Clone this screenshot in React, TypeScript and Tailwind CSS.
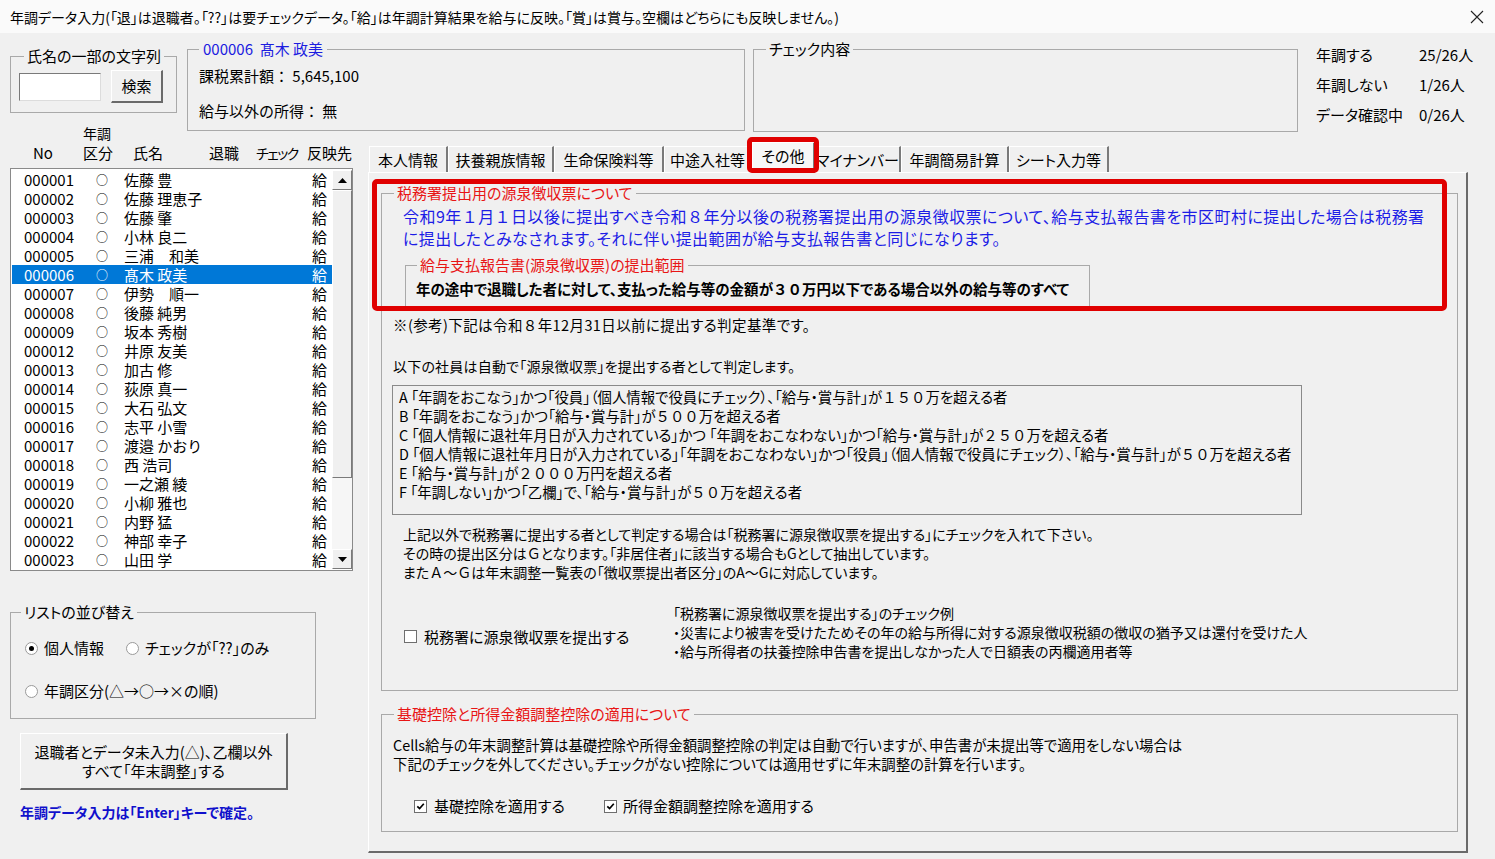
import React from "react";

const employees: [string, string][] = [
  ["000001", "佐藤 豊"],
  ["000002", "佐藤 理恵子"],
  ["000003", "佐藤 肇"],
  ["000004", "小林 良二"],
  ["000005", "三浦　和美"],
  ["000006", "髙木 政美"],
  ["000007", "伊勢　順一"],
  ["000008", "後藤 純男"],
  ["000009", "坂本 秀樹"],
  ["000012", "井原 友美"],
  ["000013", "加古 修"],
  ["000014", "荻原 真一"],
  ["000015", "大石 弘文"],
  ["000016", "志平 小雪"],
  ["000017", "渡邉 かおり"],
  ["000018", "西 浩司"],
  ["000019", "一之瀬 綾"],
  ["000020", "小柳 雅也"],
  ["000021", "内野 猛"],
  ["000022", "神部 幸子"],
  ["000023", "山田 学"],
];

const tabs: { label: string; cls: string; selected?: boolean }[] = [
  { label: "本人情報", cls: "w-[79px]" },
  { label: "扶養親族情報", cls: "w-[106px]" },
  { label: "生命保険料等", cls: "w-[110px]" },
  { label: "中途入社等", cls: "w-[88px]" },
  { label: "その他", cls: "w-[63px]", selected: true },
  { label: "マイナンバー", cls: "w-[86px]" },
  { label: "年調簡易計算", cls: "w-[108px]" },
  { label: "シート入力等", cls: "w-[100px]" },
];

const criteria = [
  "A 「年調をおこなう」かつ「役員」（個人情報で役員にチェック）、「給与・賞与計」が１５０万を超える者",
  "B 「年調をおこなう」かつ「給与・賞与計」が５００万を超える者",
  "C 「個人情報に退社年月日が入力されている」かつ 「年調をおこなわない」かつ「給与・賞与計」が２５０万を超える者",
  "D 「個人情報に退社年月日が入力されている」「年調をおこなわない」かつ「役員」（個人情報で役員にチェック）、「給与・賞与計」が５０万を超える者",
  "E 「給与・賞与計」が２０００万円を超える者",
  "F 「年調しない」かつ「乙欄」で、「給与・賞与計」が５０万を超える者",
];

// keep full-width digits / letters at full width (no proportional alternates)
function fw(text: string) {
  return text.split(/([０-９Ａ-Ｚ]+)/).map((part, i) =>
    /^[０-９Ａ-Ｚ]+$/.test(part) ? (
      <span key={i} className="[font-feature-settings:normal]">
        {part}
      </span>
    ) : (
      <React.Fragment key={i}>{part}</React.Fragment>
    )
  );
}

function Radio({ checked }: { checked?: boolean }) {
  return (
    <span className="w-[13px] h-[13px] rounded-full border border-[#9a9a9a] bg-white flex items-center justify-center shrink-0">
      {checked && <span className="w-[5px] h-[5px] rounded-full bg-black" />}
    </span>
  );
}

function Check({ checked }: { checked?: boolean }) {
  return (
    <span className="w-[13px] h-[13px] border border-[#6e6e6e] bg-white flex items-center justify-center shrink-0">
      {checked && (
        <svg width="9" height="9" viewBox="0 0 9 9">
          <path d="M1.3 4.3 L3.6 6.6 L7.8 1.8" stroke="#000" strokeWidth="1.7" fill="none" />
        </svg>
      )}
    </span>
  );
}

function Arrow({ up }: { up?: boolean }) {
  return (
    <svg width="9" height="5" viewBox="0 0 9 5">
      {up ? <path d="M0 5 L4.5 0 L9 5 Z" fill="#000" /> : <path d="M0 0 L4.5 5 L9 0 Z" fill="#000" />}
    </svg>
  );
}

export default function App() {
  return (
    <div className="w-[1495px] h-[859px] overflow-hidden bg-[#f0f0f0] text-black font-['Noto_Sans_CJK_JP','Noto_Sans',sans-serif] [font-feature-settings:'palt']">
      {/* Title bar */}
      <div className="h-[33px] bg-[#fafafa] flex items-center justify-between pl-[10px] pr-[11px]">
        <span className="text-[14px] leading-[20px]">
          年調データ入力(「退」は退職者。「??」は要チェックデータ。「給」は年調計算結果を給与に反映。「賞」は賞与。空欄はどちらにも反映しません。)
        </span>
        <svg width="14" height="14" viewBox="0 0 14 14">
          <path d="M1 1 L13 13 M13 1 L1 13" stroke="#222" strokeWidth="1.1" />
        </svg>
      </div>

      {/* Top row */}
      <div className="flex items-start h-[99px]">
        <fieldset className="ml-[10px] mt-[14px] w-[167px] h-[66px] border border-[#a9a9a9]">
          <legend className="ml-[13px] px-[3px] text-[15px] leading-[18px]">氏名の一部の文字列</legend>
          <div className="flex items-center mt-[5px] pl-[8px] h-[33px]">
            <div className="w-[82px] h-[28px] bg-white border border-t-[#7a7a7a] border-l-[#7a7a7a] border-r-[#dcdcdc] border-b-[#dcdcdc]" />
            <div className="ml-[10px] w-[52px] h-[33px] flex items-center justify-center text-[15px] border border-t-white border-l-white border-r-2 border-b-2 border-r-[#6a6a6a] border-b-[#6a6a6a] bg-[#f0f0f0]">
              検索
            </div>
          </div>
        </fieldset>

        <fieldset className="ml-[10px] mt-[7px] w-[558px] h-[91px] border border-[#a9a9a9]">
          <legend className="ml-[11px] px-[4px] text-[15px] leading-[18px] text-[#1c1ce0]">000006&nbsp;&nbsp;髙木 政美</legend>
          <div className="pl-[11px] mt-[8px] text-[15px] leading-[20px] [font-feature-settings:normal]">課税累計額：&nbsp;5,645,100</div>
          <div className="pl-[11px] mt-[15px] text-[15px] leading-[20px] [font-feature-settings:normal]">給与以外の所得：&nbsp;無</div>
        </fieldset>

        <fieldset className="ml-[8px] mt-[7px] w-[545px] h-[92px] border border-[#a9a9a9]">
          <legend className="ml-[12px] px-[3px] text-[15px] leading-[18px]">チェック内容</legend>
        </fieldset>

        <div className="ml-[18px] mt-[7px] text-[15px]">
          <div className="flex h-[30px] items-center">
            <span className="w-[103px]">年調する</span>
            <span>25/26人</span>
          </div>
          <div className="flex h-[30px] items-center">
            <span className="w-[103px]">年調しない</span>
            <span>1/26人</span>
          </div>
          <div className="flex h-[30px] items-center">
            <span className="w-[103px]">データ確認中</span>
            <span>0/26人</span>
          </div>
        </div>
      </div>

      {/* Bottom area */}
      <div className="flex items-start">
        {/* Left column */}
        <div className="w-[368px] -mt-[7px] flex flex-col">
          <div className="h-[43px] text-[14px] whitespace-nowrap">
            <div className="h-[17px] leading-[17px] pl-[83px]">年調</div>
            <div className="mt-[1px] h-[20px] leading-[20px] flex text-[15px]">
              <span className="w-[83px] pl-[33px]">No</span>
              <span className="w-[50px]">区分</span>
              <span className="w-[76px]">氏名</span>
              <span className="w-[47px]">退職</span>
              <span className="w-[51px] text-[14px] tracking-[-1.5px]">チェック</span>
              <span>反映先</span>
            </div>
          </div>

          <div className="ml-[10px] w-[343px] h-[403px] border border-[#8a8a8a] bg-white flex pl-px py-px">
            <div className="w-[320px] flex flex-col">
              {employees.map(([no, name]) => {
                const sel = no === "000006";
                return (
                  <div
                    key={no}
                    className={
                      sel
                        ? "h-[19px] flex items-center text-[15px] leading-[19px] bg-[#0078d7] text-white"
                        : "h-[19px] flex items-center text-[15px] leading-[19px]"
                    }
                  >
                    <span className="w-[84px] pl-[12px]">{no}</span>
                    <span className="w-[28px] text-[12px]">○</span>
                    <span className="flex-1 [font-feature-settings:normal]">{name}</span>
                    <span className="pr-[5px]">給</span>
                  </div>
                );
              })}
            </div>
            <div className="w-[20px] flex flex-col bg-[#f6f6f6]">
              <div className="h-[20px] flex items-center justify-center bg-[#f0f0f0] border border-t-white border-l-white border-r-[#7a7a7a] border-b-[#7a7a7a]">
                <Arrow up />
              </div>
              <div className="h-[288px] bg-[#f0f0f0] border border-t-white border-l-white border-r-[#7a7a7a] border-b-[#7a7a7a]" />
              <div className="flex-1" />
              <div className="h-[20px] flex items-center justify-center bg-[#f0f0f0] border border-t-white border-l-white border-r-[#7a7a7a] border-b-[#7a7a7a]">
                <Arrow />
              </div>
            </div>
          </div>

          <fieldset className="ml-[10px] mt-[32px] w-[306px] h-[116px] border border-[#a9a9a9]">
            <legend className="ml-[10px] px-[3px] text-[15px] leading-[18px]">リストの並び替え</legend>
            <div className="flex items-center h-[20px] mt-[17px] pl-[14px] text-[15px]">
              <Radio checked />
              <span className="ml-[6px] w-[82px]">個人情報</span>
              <Radio />
              <span className="ml-[6px]">チェックが「??」のみ</span>
            </div>
            <div className="flex items-center h-[20px] mt-[23px] pl-[14px] text-[15px]">
              <Radio />
              <span className="ml-[6px]">年調区分(△→○→×の順)</span>
            </div>
          </fieldset>

          <div className="ml-[20px] mt-[14px] w-[268px] h-[57px] flex flex-col items-center justify-center text-[15px] leading-[19px] bg-[#f0f0f0] border border-t-white border-l-white border-r-2 border-b-2 border-r-[#6a6a6a] border-b-[#6a6a6a]">
            <span>退職者とデータ未入力(△)、乙欄以外</span>
            <span>すべて「年末調整」する</span>
          </div>

          <div className="ml-[20px] mt-[12px] text-[14px] leading-[20px] font-bold text-[#1010cc]">
            年調データ入力は「Enter」キーで確定。
          </div>
        </div>

        {/* Right column: tabs */}
        <div className="flex flex-col">
          <div className="relative flex items-end h-[32px] mt-[8px] pl-px">
            {tabs.map((t) =>
              t.selected ? (
                <div
                  key={t.label}
                  className={`${t.cls} h-[31px] -mb-px z-10 flex justify-center pt-[3px] text-[15px] leading-[20px] bg-[#f7f7f7] border-t border-l border-white border-r-2 border-r-[#7a7a7a]`}
                >
                  {t.label}
                </div>
              ) : (
                <div
                  key={t.label}
                  className={`${t.cls} h-[26px] flex items-center justify-center text-[15px] leading-[20px] border-t border-l border-white border-r-2 border-r-[#7a7a7a]`}
                >
                  {t.label}
                </div>
              )
            )}
            <div className="absolute left-[379px] top-[-3px] w-[72px] h-[36px] border-[5px] border-[#e00000] rounded-[5px] z-20" />
          </div>

          <div className="relative w-[1100px] h-[681px] flex flex-col bg-[#f0f0f0] border-t border-l border-white border-r-2 border-b-2 border-r-[#6a6a6a] border-b-[#6a6a6a]">
            {/* Group 1 */}
            <fieldset className="ml-[12px] mt-[11px] w-[1077px] h-[507px] border border-[#a9a9a9]">
              <legend className="ml-[12px] px-[3px] text-[15px] leading-[18px] text-[#e81515]">税務署提出用の源泉徴収票について</legend>
              <div className="flex flex-col">
                <div className="mt-[3px] pl-[21px] text-[16px] leading-[22px] tracking-[0.45px] text-[#1c1ce6] whitespace-nowrap">
                  <div>{fw("令和9年１月１日以後に提出すべき令和８年分以後の税務署提出用の源泉徴収票について、給与支払報告書を市区町村に提出した場合は税務署")}</div>
                  <div>{fw("に提出したとみなされます。それに伴い提出範囲が給与支払報告書と同じになります。")}</div>
                </div>

                <fieldset className="ml-[23px] mt-[7px] w-[685px] h-[54px] border border-[#a9a9a9]">
                  <legend className="ml-[11px] px-[3px] text-[15px] leading-[18px] text-[#e81515]">給与支払報告書(源泉徴収票)の提出範囲</legend>
                  <div className="mt-[5px] pl-[10px] text-[14.5px] leading-[20px] font-bold whitespace-nowrap">
                    {fw("年の途中で退職した者に対して、支払った給与等の金額が３０万円以下である場合以外の給与等のすべて")}
                  </div>
                </fieldset>

                <div className="mt-[5px] pl-[11px] text-[14.5px] leading-[20px] tracking-[0.4px]">{fw("※(参考)下記は令和８年12月31日以前に提出する判定基準です。")}</div>
                <div className="mt-[21px] pl-[11px] text-[14px] leading-[20px] tracking-[0.2px]">以下の社員は自動で「源泉徴収票」を提出する者として判定します。</div>

                <div className="ml-[10px] mt-[9px] w-[910px] h-[130px] border border-[#8a8a8a] pt-px pl-[6px] text-[14.4px] leading-[19px] whitespace-nowrap">
                  {criteria.map((c) => (
                    <div key={c}>{fw(c)}</div>
                  ))}
                </div>

                <div className="mt-[10px] pl-[21px] text-[14px] leading-[19px] whitespace-nowrap">
                  <div>上記以外で税務署に提出する者として判定する場合は「税務署に源泉徴収票を提出する」にチェックを入れて下さい。</div>
                  <div>{fw("その時の提出区分はＧとなります。「非居住者」に該当する場合もGとして抽出しています。")}</div>
                  <div>{fw("またＡ～Ｇは年末調整一覧表の「徴収票提出者区分」のA～Gに対応しています。")}</div>
                </div>

                <div className="mt-[22px] flex items-start text-[14px] leading-[19px] whitespace-nowrap">
                  <div className="w-[291px] pl-[22px] pt-[23px] flex items-center">
                    <Check />
                    <span className="ml-[7px] text-[15px]">税務署に源泉徴収票を提出する</span>
                  </div>
                  <div>
                    <div>「税務署に源泉徴収票を提出する」のチェック例</div>
                    <div>・災害により被害を受けたためその年の給与所得に対する源泉徴収税額の徴収の猶予又は還付を受けた人</div>
                    <div>・給与所得者の扶養控除申告書を提出しなかった人で日額表の丙欄適用者等</div>
                  </div>
                </div>
              </div>
            </fieldset>

            {/* Group 2 */}
            <fieldset className="ml-[12px] mt-[14px] w-[1077px] h-[127px] border border-[#a9a9a9]">
              <legend className="ml-[12px] px-[3px] text-[15px] leading-[18px] text-[#e81515]">基礎控除と所得金額調整控除の適用について</legend>
              <div className="flex flex-col">
                <div className="mt-[12px] pl-[11px] text-[14.4px] leading-[19px] whitespace-nowrap">
                  <div>Cells給与の年末調整計算は基礎控除や所得金額調整控除の判定は自動で行いますが、申告書が未提出等で適用をしない場合は</div>
                  <div>下記のチェックを外してください。チェックがない控除については適用せずに年末調整の計算を行います。</div>
                </div>
                <div className="mt-[23px] pl-[32px] flex items-center h-[20px] text-[15px]">
                  <Check checked />
                  <span className="ml-[7px] w-[170px]">基礎控除を適用する</span>
                  <Check checked />
                  <span className="ml-[6px]">所得金額調整控除を適用する</span>
                </div>
              </div>
            </fieldset>

            {/* red highlight annotation */}
            <div className="absolute left-[3px] top-[6px] w-[1075px] h-[132px] border-[5px] border-[#e00000] rounded-[5px]" />
          </div>
        </div>
      </div>
    </div>
  );
}
